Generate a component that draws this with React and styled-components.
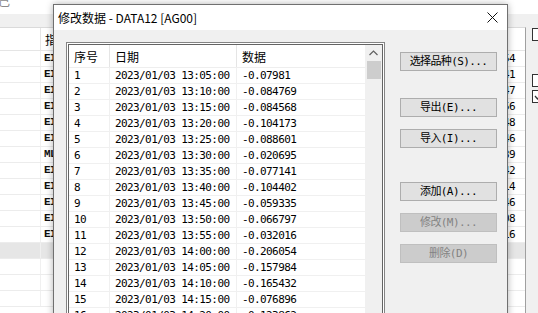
import React from "react";
import styled, { createGlobalStyle } from "styled-components";

const CJK = `"Noto Sans CJK SC", "Noto Sans", sans-serif`;
const MONO = `"DejaVu Sans Mono", "Noto Sans CJK SC", monospace`;
const SLAB = `"Liberation Mono", "DejaVu Sans Mono", monospace`;

const GlobalStyle = createGlobalStyle`
  html, body {
    margin: 0;
    padding: 0;
    background: #fff;
    overflow: hidden;
  }
  body {
    font-family: ${CJK};
  }
  * {
    box-sizing: border-box;
  }
`;

// only the edges of the main window peek out around the dialog
const bgRows = [
  ["EI", "54"],
  ["EI", "41"],
  ["EI", "47"],
  ["EI", "56"],
  ["EI", "48"],
  ["EI", "46"],
  ["ML", "39"],
  ["EI", "42"],
  ["EI", "14"],
  ["EI", "46"],
  ["EI", "08"],
  ["EI", "16"],
  ["", ""],
  ["", ""],
  ["", ""],
  ["", ""],
];

const data = [
  ["1", "13:05:00", "-0.07981"],
  ["2", "13:10:00", "-0.084769"],
  ["3", "13:15:00", "-0.084568"],
  ["4", "13:20:00", "-0.104173"],
  ["5", "13:25:00", "-0.088601"],
  ["6", "13:30:00", "-0.020695"],
  ["7", "13:35:00", "-0.077141"],
  ["8", "13:40:00", "-0.104402"],
  ["9", "13:45:00", "-0.059335"],
  ["10", "13:50:00", "-0.066797"],
  ["11", "13:55:00", "-0.032016"],
  ["12", "14:00:00", "-0.206054"],
  ["13", "14:05:00", "-0.157984"],
  ["14", "14:10:00", "-0.165432"],
  ["15", "14:15:00", "-0.076896"],
  ["16", "14:20:00", "-0.123862"],
];

const buttons = [
  { label: "选择品种(S)...", gap: 0 },
  { label: "导出(E)...", gap: 27 },
  { label: "导入(I)...", gap: 12 },
  { label: "添加(A)...", gap: 34 },
  { label: "修改(M)...", gap: 12, disabled: true },
  { label: "删除(D)", gap: 12, disabled: true },
];

const App = () => {
  return (
    <Screen>
      <GlobalStyle />
      <TopStrip>
        <Glyph>己</Glyph>
      </TopStrip>
      <Band />
      <Main>
        <Grid>
          <GridHeader>
            <HeadCell $w={41} />
            <HeadCell>指</HeadCell>
          </GridHeader>
          {bgRows.map((r, i) => (
            <GridRow key={i} $selected={i === 12}>
              <GridCell $w={41} />
              <CodeCell>{r[0]}</CodeCell>
              <NumCell>{r[1]}</NumCell>
            </GridRow>
          ))}
        </Grid>
        <SidePanel>
          <Check $top={1} />
          <Check $top={33} />
          <Check $top={3}>
            <svg width="11" height="11" viewBox="0 0 11 11">
              <polyline points="2,5 4.5,8 9,2" fill="none" stroke="#333" strokeWidth="1.2" />
            </svg>
          </Check>
        </SidePanel>
      </Main>

      <Dialog>
        <TitleBar>
          <Title>修改数据 - DATA12 [AG00]</Title>
          <svg width="11" height="11" viewBox="0 0 11 11">
            <path d="M0.5 0.5 L10.5 10.5 M10.5 0.5 L0.5 10.5" stroke="#111" strokeWidth="1" />
          </svg>
        </TitleBar>
        <Body>
          <ListBox>
            <ListInner>
              <Table>
                <TableHead>
                  <Th $w={41}>序号</Th>
                  <Th $w={127}>日期</Th>
                  <Th>数据</Th>
                </TableHead>
                {data.map((d) => (
                  <Tr key={d[0]}>
                    <Td $w={41}>{d[0]}</Td>
                    <Td $w={127}>2023/01/03 {d[1]}</Td>
                    <Td>{d[2]}</Td>
                  </Tr>
                ))}
              </Table>
              <ScrollBar>
                <ArrowBtn>
                  <svg width="9" height="6" viewBox="0 0 9 6">
                    <polyline points="0.5,5 4.5,1 8.5,5" fill="none" stroke="#606060" strokeWidth="1.2" />
                  </svg>
                </ArrowBtn>
                <Thumb />
              </ScrollBar>
            </ListInner>
          </ListBox>
          <ButtonCol>
            {buttons.map((b) => (
              <Button key={b.label} $gap={b.gap} disabled={b.disabled}>
                {b.label}
              </Button>
            ))}
          </ButtonCol>
        </Body>
      </Dialog>
    </Screen>
  );
};

const Screen = styled.div`
  position: relative;
  width: 538px;
  height: 313px;
  overflow: hidden;
  background: #fff;
  display: flex;
  flex-direction: column;
`;

const TopStrip = styled.div`
  height: 14px;
  flex-shrink: 0;
  background: #fff;
  overflow: hidden;
`;

const Glyph = styled.span`
  display: block;
  font: 12px/12px ${CJK};
  color: #8a8a8a;
  margin: -5px 0 0 -2px;
`;

const Band = styled.div`
  height: 13px;
  flex-shrink: 0;
  background: #f0f0f0;
`;

const Main = styled.div`
  flex: 1;
  display: flex;
  min-height: 0;
`;

const Grid = styled.div`
  width: 526px;
  flex-shrink: 0;
  background: #fff;
  border-top: 1px solid #dadada;
  border-right: 1px solid #a0a0a0;
`;

const GridHeader = styled.div`
  display: flex;
  height: 23px;
  border-bottom: 1px solid #e5e5e5;
`;

const HeadCell = styled.div`
  width: ${(p) => (p.$w ? `${p.$w}px` : "auto")};
  flex: ${(p) => (p.$w ? "none" : "1")};
  border-right: ${(p) => (p.$w ? "1px solid #e5e5e5" : "none")};
  padding-left: 4px;
  display: flex;
  align-items: center;
  font: 12px ${CJK};
  color: #000;
  white-space: nowrap;
  overflow: hidden;
`;

const GridRow = styled.div`
  display: flex;
  height: 16px;
  border-bottom: 1px solid #ececec;
  background: ${(p) => (p.$selected ? "#e6e6e6" : "#fff")};
`;

const GridCell = styled.div`
  width: ${(p) => p.$w}px;
  flex-shrink: 0;
  border-right: 1px solid #f0f0f0;
`;

const CodeCell = styled.div`
  flex: 1;
  padding-left: 3px;
  font: bold 11px/15px ${SLAB};
  letter-spacing: -0.6px;
  color: #111;
`;

const NumCell = styled.div`
  padding-right: 10px;
  font: 11px/15px ${MONO};
  letter-spacing: -0.6px;
  color: #000;
  text-align: right;
`;

const SidePanel = styled.div`
  flex: 1;
  background: #f0f0f0;
  padding-left: 6px;
  display: flex;
  flex-direction: column;
`;

const Check = styled.div`
  width: 13px;
  height: 13px;
  flex-shrink: 0;
  margin-top: ${(p) => p.$top}px;
  border: 1px solid #333;
  background: #fff;
  display: flex;
  align-items: center;
  justify-content: center;
`;

const Dialog = styled.div`
  position: absolute;
  left: 53px;
  top: 4px;
  width: 455px;
  height: 340px;
  background: #f0f0f0;
  border: 1px solid #707070;
  box-shadow: 0 0 7px rgba(0, 0, 0, 0.3);
  display: flex;
  flex-direction: column;
`;

const TitleBar = styled.div`
  height: 25px;
  flex-shrink: 0;
  background: #fff;
  display: flex;
  align-items: center;
  justify-content: space-between;
  padding: 0 9px 0 4px;
`;

const Title = styled.div`
  font: 12px ${CJK};
  color: #000;
`;

const Body = styled.div`
  flex: 1;
  display: flex;
  align-items: flex-start;
  padding: 12px 0 0 12px;
`;

const ListBox = styled.div`
  width: 319px;
  height: 290px;
  flex-shrink: 0;
  border: 1px solid #848484;
  padding: 1px;
  background: #fff;
`;

const ListInner = styled.div`
  height: 100%;
  border: 1px solid #646464;
  display: flex;
  overflow: hidden;
  background: #fff;
`;

const Table = styled.div`
  flex: 1;
  min-width: 0;
`;

const TableHead = styled.div`
  display: flex;
  height: 23px;
  border-bottom: 1px solid #eeeeee;
`;

const Th = styled.div`
  width: ${(p) => (p.$w ? `${p.$w}px` : "auto")};
  flex: ${(p) => (p.$w ? "none" : "1")};
  border-right: ${(p) => (p.$w ? "1px solid #e5e5e5" : "none")};
  padding-left: 5px;
  display: flex;
  align-items: center;
  font: 12px ${CJK};
  color: #000;
`;

const Tr = styled.div`
  display: flex;
  height: 16px;
  border-bottom: 1px solid #f0f0f0;
`;

const Td = styled.div`
  width: ${(p) => (p.$w ? `${p.$w}px` : "auto")};
  flex: ${(p) => (p.$w ? "none" : "1")};
  border-right: ${(p) => (p.$w ? "1px solid #f0f0f0" : "none")};
  padding-left: 5px;
  font: 11px/15px ${MONO};
  letter-spacing: -0.6px;
  color: #000;
  white-space: nowrap;
  overflow: hidden;
`;

const ScrollBar = styled.div`
  width: 17px;
  flex-shrink: 0;
  background: #f0f0f0;
  display: flex;
  flex-direction: column;
`;

const ArrowBtn = styled.div`
  height: 16px;
  display: flex;
  align-items: center;
  justify-content: center;
`;

const Thumb = styled.div`
  height: 18px;
  margin: 0 1px 0 2px;
  background: #cdcdcd;
`;

const ButtonCol = styled.div`
  width: 97px;
  margin: 10px 0 0 15px;
  display: flex;
  flex-direction: column;
`;

const Button = styled.button`
  height: 19px;
  margin-top: ${(p) => p.$gap}px;
  padding: 0;
  border: 1px solid #adadad;
  background: #e1e1e1;
  font: 11px/17px ${MONO};
  letter-spacing: -0.6px;
  color: #000;
  text-align: center;

  &:disabled {
    background: #cccccc;
    border-color: #bfbfbf;
    color: #838383;
  }
`;

export default App;
